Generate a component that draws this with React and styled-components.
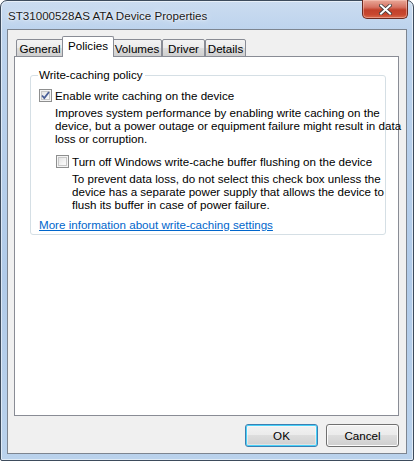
import React from "react";
import styled, { createGlobalStyle } from "styled-components";

const Global = createGlobalStyle`
  html, body, #root {
    margin: 0;
    padding: 0;
    height: 100%;
  }
  body {
    background: #ffffff;
    font-family: "Liberation Sans", Arial, sans-serif;
    font-size: 11.6px;
    color: #000;
  }
`;

const Window = styled.div`
  box-sizing: border-box;
  height: 100vh;
  width: 100%;
  display: flex;
  flex-direction: column;
  padding: 0 6px 6px 6px;
  border: 1px solid #3d4b5c;
  border-radius: 7px 7px 2px 2px;
  background: linear-gradient(180deg, #cbdcf0 0px, #bcd3ed 30px, #b1cbe9 60%, #bad2ec 100%);
  box-shadow: inset 0 0 0 1px rgba(255, 255, 255, 0.55);
`;

const TitleBar = styled.div`
  height: 28px;
  display: flex;
  align-items: flex-start;
  justify-content: space-between;
`;

const Title = styled.div`
  padding: 8px 0 0 1px;
  font-size: 11.6px;
  color: #1a1a1a;
  text-shadow: 0 0 6px rgba(255, 255, 255, 0.9), 0 0 2px #fff;
`;

const CloseButton = styled.div`
  width: 46px;
  height: 19px;
  margin-top: -1px;
  margin-right: -1px;
  box-sizing: border-box;
  border: 1px solid #6b2a20;
  border-top: none;
  border-radius: 0 0 5px 5px;
  background: linear-gradient(180deg, #e9a898 0%, #d67262 40%, #c2412b 55%, #c8472f 80%, #d96a4c 100%);
  box-shadow: inset 0 0 0 1px rgba(255, 210, 200, 0.45);
  display: flex;
  align-items: center;
  justify-content: center;
`;

const Client = styled.div`
  flex: 1;
  display: flex;
  flex-direction: column;
  background: #f0f0f0;
  border: 1px solid #7d8590;
  padding: 7px 7px 6px 6px;
  min-height: 0;
`;

const TabStrip = styled.div`
  display: flex;
  align-items: flex-end;
  padding-left: 2px;
  height: 20px;
  position: relative;
  z-index: 1;
  margin-bottom: -1px;
`;

const Tab = styled.div`
  box-sizing: border-box;
  width: ${p => p.w}px;
  height: ${p => (p.active ? 21 : 18)}px;
  margin: ${p => (p.active ? "0 -2px" : "0")};
  border: 1px solid #898c95;
  border-bottom: ${p => (p.active ? "none" : "1px solid #898c95")};
  border-radius: 2px 2px 0 0;
  background: ${p =>
    p.active ? "#ffffff" : "linear-gradient(180deg, #f3f3f3 0%, #ebebeb 50%, #dddddd 51%, #cfcfcf 100%)"};
  position: relative;
  z-index: ${p => (p.active ? 2 : 1)};
  display: flex;
  align-items: ${p => (p.active ? "flex-start" : "center")};
  padding-top: ${p => (p.active ? "2px" : "0")};
  justify-content: center;
  white-space: nowrap;
  color: #000;
`;

const Panel = styled.div`
  flex: 1;
  background: #ffffff;
  border: 1px solid #898c95;
  padding: 11px 12px 0 15px;
`;

const Group = styled.fieldset`
  margin: 0;
  min-width: 0;
  padding: 4px 8px 2px 8px;
  border: 1px solid #d5dfe5;
  border-radius: 3px;
  width: 356px;
  box-sizing: border-box;
`;

const Legend = styled.legend`
  padding: 0 2px 0 1px;
  margin-left: -1px;
  line-height: 14px;
`;

const CheckRow = styled.div`
  display: flex;
  align-items: center;
  gap: 3px;
  margin-left: ${p => p.indent || 0}px;
  margin-top: ${p => p.top || 0}px;
  height: 15px;
  white-space: nowrap;
`;

const Box = styled.div`
  width: 13px;
  height: 13px;
  flex-shrink: 0;
  box-sizing: border-box;
  border: 1px solid #8e8f8f;
  background: linear-gradient(135deg, #dcdcdc 0%, #f5f5f5 60%, #ffffff 100%);
  box-shadow: inset 0 0 0 1px #f4f4f4, inset 0 0 0 2px #c8c8c8;
  display: flex;
  align-items: center;
  justify-content: center;
`;

const Description = styled.div`
  margin-left: ${p => p.indent}px;
  margin-top: 3px;
  line-height: 13px;
  white-space: nowrap;
`;

const MoreLink = styled.a`
  display: block;
  width: max-content;
  margin-top: 7px;
  color: #0066cc;
  text-decoration: underline;
  line-height: 14px;
  cursor: pointer;
`;

const ButtonRow = styled.div`
  display: flex;
  justify-content: flex-end;
  gap: 8px;
  padding-top: 8px;
`;

const Button = styled.button`
  width: 73px;
  height: 23px;
  box-sizing: border-box;
  border: 1px solid ${p => (p.primary ? "#3c7fb1" : "#707070")};
  border-radius: 3px;
  background: linear-gradient(180deg, #f2f2f2 0%, #ebebeb 48%, #dddddd 50%, #cfcfcf 100%);
  box-shadow: ${p =>
    p.primary ? "inset 0 0 0 1px #48d1f9, inset 0 0 0 2px rgba(255,255,255,0.4)" : "inset 0 0 0 1px #fcfcfc"};
  font-family: "Liberation Sans", Arial, sans-serif;
  font-size: 11.6px;
  color: #000;
  padding: 0;
`;

const tabs = [
  { label: "General", w: 48 },
  { label: "Policies", w: 52, active: true },
  { label: "Volumes", w: 50 },
  { label: "Driver", w: 43 },
  { label: "Details", w: 41 },
];

function Check({ checked }) {
  return (
    <Box>
      {checked && (
        <svg width="9" height="9" viewBox="0 0 9 9">
          <path d="M1 4.5 L3.3 7 L8 1" fill="none" stroke="#4a5f97" strokeWidth="1.8" />
        </svg>
      )}
    </Box>
  );
}

export default function App() {
  return (
    <>
      <Global />
      <Window>
        <TitleBar>
          <Title>ST31000528AS ATA Device Properties</Title>
          <CloseButton>
            <svg width="13" height="11" viewBox="0 0 13 11">
              <path
                d="M2 1.5 L11 9.5 M11 1.5 L2 9.5"
                stroke="#3a3a3a"
                strokeWidth="3.6"
                strokeLinecap="square"
              />
              <path
                d="M2 1.5 L11 9.5 M11 1.5 L2 9.5"
                stroke="#ffffff"
                strokeWidth="2"
                strokeLinecap="square"
              />
            </svg>
          </CloseButton>
        </TitleBar>
        <Client>
          <TabStrip>
            {tabs.map(t => (
              <Tab key={t.label} w={t.w} active={t.active}>
                {t.label}
              </Tab>
            ))}
          </TabStrip>
          <Panel>
            <Group>
              <Legend>Write-caching policy</Legend>
              <CheckRow top={2}>
                <Check checked />
                Enable write caching on the device
              </CheckRow>
              <Description indent={16}>
                Improves system performance by enabling write caching on the
                <br />
                device, but a power outage or equipment failure might result in data
                <br />
                loss or corruption.
              </Description>
              <CheckRow indent={17} top={9}>
                <Check />
                Turn off Windows write-cache buffer flushing on the device
              </CheckRow>
              <Description indent={33}>
                To prevent data loss, do not select this check box unless the
                <br />
                device has a separate power supply that allows the device to
                <br />
                flush its buffer in case of power failure.
              </Description>
              <MoreLink>More information about write-caching settings</MoreLink>
            </Group>
          </Panel>
          <ButtonRow>
            <Button primary>OK</Button>
            <Button>Cancel</Button>
          </ButtonRow>
        </Client>
      </Window>
    </>
  );
}
